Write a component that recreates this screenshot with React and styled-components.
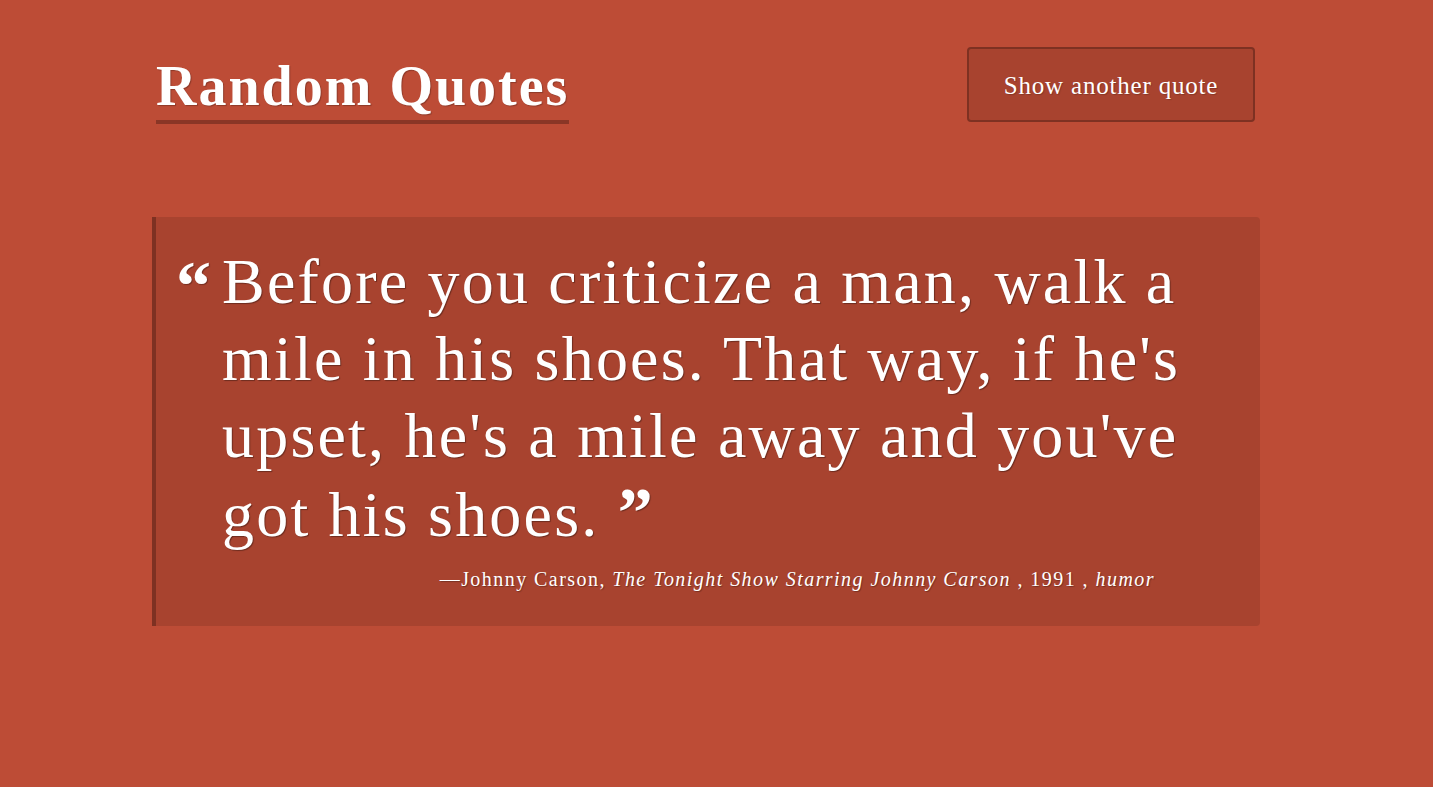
import React from 'react'
import styled, { createGlobalStyle } from 'styled-components'

const GlobalStyle = createGlobalStyle`
  html, body {
    margin: 0;
    padding: 0;
    background: #bd4c36;
  }
  body {
    font-family: "Liberation Serif", "DejaVu Serif", serif;
    color: #fff;
  }
`;

const quote = {
  text: "Before you criticize a man, walk a mile in his shoes. That way, if he's upset, he's a mile away and you've got his shoes.",
  author: 'Johnny Carson',
  source: 'The Tonight Show Starring Johnny Carson',
  year: '1991',
  tag: 'humor',
}

const App = () => {
  return (
    <Page>
      <GlobalStyle />
      <Header>
        <Title>Random Quotes</Title>
        <Button>Show another quote</Button>
      </Header>
      <Card>
        <OpenMark>&ldquo;</OpenMark>
        <Body>
          <QuoteText>
            {quote.text} <CloseMark>&rdquo;</CloseMark>
          </QuoteText>
          <Citation>
            &mdash;{quote.author}, <em>{quote.source}</em> , {quote.year} , <em>{quote.tag}</em>
          </Citation>
        </Body>
      </Card>
    </Page>
  )
}

export const Page = styled.div`
  width: 1108px;
  padding: 47px 0 0 152px;
  box-sizing: content-box;
`;

export const Header = styled.header`
  display: flex;
  justify-content: space-between;
  align-items: flex-start;
  padding-left: 4px;
  padding-right: 5px;
`;

export const Title = styled.h1`
  margin: 0;
  margin-top: 9px;
  padding-bottom: 3px;
  font-size: 56px;
  font-weight: 700;
  line-height: 61px;
  letter-spacing: 2px;
  border-bottom: 4px solid #8a3626;
  text-shadow: 1px 1px 1px rgba(0, 0, 0, 0.25);
`;

export const Button = styled.button`
  width: 288px;
  height: 75px;
  padding-top: 4px;
  background: #a8432f;
  border: 2px solid #7e3122;
  border-radius: 4px;
  color: #fff;
  font-family: "Liberation Serif", "DejaVu Serif", serif;
  font-size: 25px;
  letter-spacing: 0.8px;
  cursor: pointer;
  text-shadow: 1px 1px 1px rgba(0, 0, 0, 0.2);
`;

export const Card = styled.section`
  display: flex;
  margin-top: 93px;
  background: #a8432f;
  border-left: 4px solid #7e3122;
  border-radius: 0 4px 4px 0;
  padding: 26px 70px 35px 22px;
`;

export const OpenMark = styled.span`
  flex: none;
  width: 46px;
  font-size: 70px;
  font-weight: 700;
  line-height: 70px;
  margin-top: 8px;
  margin-left: -2px;
  text-shadow: 1px 1px 1px rgba(0, 0, 0, 0.3);
`;

export const Body = styled.div`
  flex: 1;
`;

export const QuoteText = styled.p`
  margin: 0;
  font-size: 64px;
  line-height: 77px;
  letter-spacing: 2.2px;
  text-shadow: 1px 1px 1px rgba(0, 0, 0, 0.35);
`;

export const CloseMark = styled.span`
  font-weight: 700;
  font-size: 70px;
`;

export const Citation = styled.p`
  margin: 15px 35px 0 0;
  text-align: right;
  font-size: 20px;
  letter-spacing: 1.45px;
  text-shadow: 1px 1px 1px rgba(0, 0, 0, 0.3);
`;

export default App
